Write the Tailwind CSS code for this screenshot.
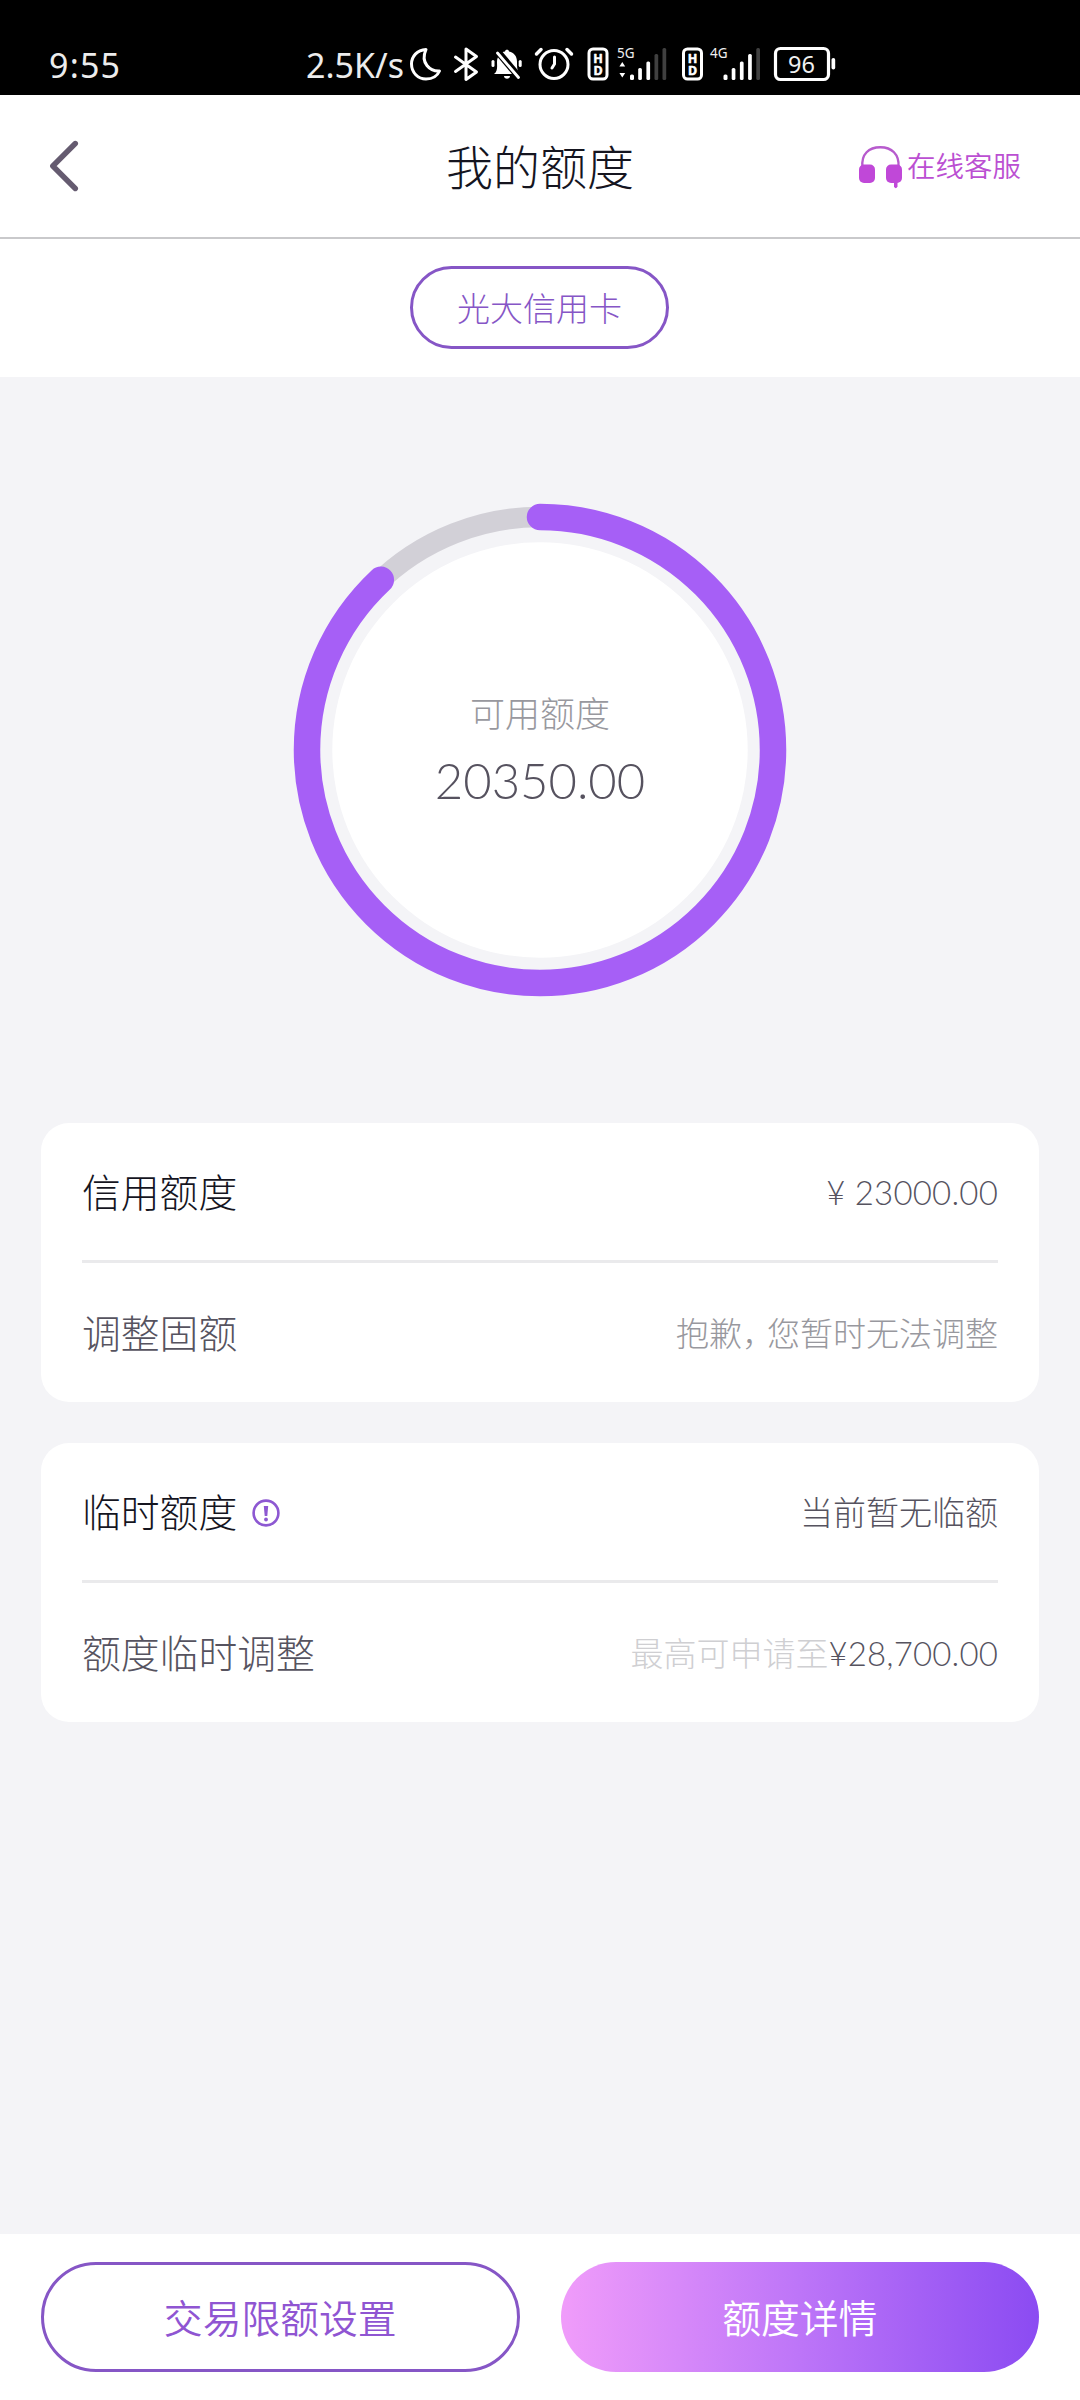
<!DOCTYPE html>
<html lang="zh-CN">
<head>
<meta charset="utf-8">
<title>我的额度</title>
<script src="https://cdn.jsdelivr.net/npm/@tailwindcss/browser@4"></script>
</head>
<body class="w-[1080px] h-[2400px] overflow-hidden bg-[#f4f4f7] flex flex-col font-[Lato,'Noto_Sans_CJK_SC',sans-serif] font-light">

<!-- Status bar -->
<div class="h-[95px] shrink-0 bg-black text-[#ececec] flex items-start pt-[40px] pl-[49px] font-['Noto_Sans',sans-serif] font-normal text-[34px] leading-[50px]">
  <span class="w-[257px] tracking-[1.2px]">9:55</span>
  <span class="w-[99px] whitespace-nowrap">2.5K/s</span>
  <svg class="w-[435px] h-[50px] shrink-0" viewBox="405 40 435 50" fill="none" stroke="#fff" stroke-linecap="round" stroke-linejoin="round">
    <!-- moon -->
    <path stroke-width="3" d="M426 49.500C417 50 411.500 56.500 411.500 64C411.500 72.500 418 79 426 79C432.500 79 437.500 75.500 439.500 71C430 71.500 420 63 426 49.500Z"/>
    <!-- bluetooth -->
    <path stroke-width="3" d="M455.500 57L476.500 72L466 79.500V49L476.500 56.500L455.500 71.500"/>
    <!-- muted bell -->
    <g fill="#fff" stroke="none">
      <path d="M494 74C498 71 497 66 497 62C497 56 501 52 505 51.500C505 49 509 49 509 51.500C514 52.500 517 56 517 62C517 67 517 71 520 74Z"/>
      <path d="M504 76H510C510 79.500 504 79.500 504 76Z"/>
      <rect x="491.500" y="60" width="3" height="7" rx="1.500"/><rect x="518.700" y="60" width="3" height="7" rx="1.500"/>
    </g>
    <path stroke="#000" stroke-width="7" stroke-linecap="butt" d="M498 52L519 77"/>
    <path stroke-width="2.800" d="M497.500 53L518.500 77.500"/>
    <!-- alarm -->
    <circle cx="554" cy="64.500" r="14" stroke-width="3"/>
    <path stroke-width="3" d="M554.500 57V64L552 68"/>
    <path stroke-width="3.500" d="M536.500 54L541 49.500M571.500 54L567 49.500"/>
    <!-- HD badges -->
    <rect x="589" y="49" width="18" height="30" rx="4" stroke-width="3"/>
    <rect x="683.500" y="49" width="18" height="30" rx="4" stroke-width="3"/>
    <g fill="#fff" stroke="#fff" stroke-width=".5" font-family="Noto Sans" font-weight="700" font-size="12.500" text-anchor="middle">
      <text x="598" y="63">H</text><text x="598" y="74.800">D</text>
      <text x="692.500" y="63">H</text><text x="692.500" y="74.800">D</text>
    </g>
    <g fill="#f0f0f0" stroke="none" font-family="Noto Sans" font-size="13.500">
      <text x="617" y="57.700">5G</text><text x="710" y="57.700">4G</text>
      <text x="788" y="73.200" font-size="23.500">96</text>
    </g>
    <!-- signal bars -->
    <g fill="#fff" stroke="none">
      <path d="M622.300 62L625.200 66.500H619.400ZM622.300 77.500L625.200 73H619.400Z"/>
      <rect x="630" y="74.500" width="4" height="5.500" rx="1.500"/><rect x="638.200" y="68" width="3.700" height="12" rx="1.500"/><rect x="646.400" y="61.500" width="3.700" height="18.500" rx="1.500"/>
      <rect x="723.500" y="74.500" width="4" height="5.500" rx="1.500"/><rect x="731.700" y="68" width="3.700" height="12" rx="1.500"/><rect x="739.900" y="61.500" width="3.700" height="18.500" rx="1.500"/><rect x="748.100" y="54" width="3.700" height="26" rx="1.500"/>
      <g fill="#404040"><rect x="654.500" y="54" width="3.700" height="26" rx="1.500"/><rect x="662.500" y="48" width="3.700" height="32" rx="1.500"/><rect x="756.300" y="48" width="3.700" height="32" rx="1.500"/></g>
      <rect x="831.500" y="58" width="3.700" height="11.500" rx="1.800"/>
    </g>
    <!-- battery -->
    <rect x="775.500" y="48.500" width="53" height="31" rx="5" stroke-width="3.200"/>
  </svg>
</div>

<!-- Header -->
<header class="h-[144px] shrink-0 bg-white border-b-2 border-[#c9c9cb] grid grid-cols-3 items-center pl-[49px] pr-[59px]">
  <svg class="w-[30px] h-[52px]" viewBox="0 0 30 52" fill="none" stroke="#655b70" stroke-width="5.400" stroke-linecap="round" stroke-linejoin="round"><path d="M26.300 3.500L3.800 26L26.300 48.500"/></svg>
  <h1 class="text-[47px] leading-none text-[#15151f] whitespace-nowrap text-center translate-x-[5px] pt-[2px]">我的额度</h1>
  <div class="flex items-center justify-end text-[#bb4fd2] text-[28.500px] font-[350] whitespace-nowrap pt-px">
    <svg class="w-[44px] h-[44px] mr-[5px]" viewBox="858 144 44 44" fill="#c048d8">
      <path fill="none" stroke="#b75bcd" stroke-width="2.400" d="M862.500 166C861 153 869 146.200 880.300 146.200C891.500 146.200 899.500 153 898.500 166"/>
      <rect x="859" y="163.500" width="16" height="18.500" rx="5"/><rect x="886" y="163.500" width="16" height="18.500" rx="5"/>
      <path d="M894 181H897.500V185.500Q895.700 189 894 185.500Z"/>
    </svg>
    <span>在线客服</span>
  </div>
</header>

<!-- Card selector -->
<div class="h-[138px] shrink-0 bg-white flex justify-center items-start pt-[27px] pr-px">
  <button class="w-[259px] h-[83px] rounded-full border-[3px] border-[#8656c6] text-[#8656c6] text-[33px] leading-none pt-px">光大信用卡</button>
</div>

<!-- Quota ring -->
<section class="h-[746px] shrink-0 grid place-items-center">
  <svg class="col-start-1 row-start-1 w-[494px] h-[494px]" viewBox="-247 -247 494 494" fill="none">
    <circle r="207.700" fill="#fff"/>
    <circle r="233" stroke="#d2d0d7" stroke-width="20.500"/>
    <circle r="233" stroke="#a65ff6" stroke-width="26.500" stroke-linecap="round" pathLength="1000" stroke-dasharray="880.300 1000" transform="rotate(-90)"/>
  </svg>
  <div class="col-start-1 row-start-1 flex flex-col items-center gap-[21px] pb-[5px]">
    <span class="text-[35px] leading-[44px] text-[#98989e]">可用额度</span>
    <span class="text-[49px] leading-[48px] text-[#56525f]">20350.00</span>
  </div>
</section>

<!-- Quota details -->
<main class="flex-1 px-[41px] flex flex-col gap-[41px] text-[33px] leading-none text-[#56535f]">
  <section class="h-[279px] bg-white rounded-[28px] px-[41px] grid grid-rows-2 divide-y-[3px] divide-[#eaeaec]">
    <div class="flex items-center justify-between pt-[3px]"><span class="text-[38.800px] text-[#15151f]">信用额度</span><span class="tracking-[0.2px]">¥ 23000.00</span></div>
    <div class="flex items-center justify-between pt-[3px]"><span class="text-[38.800px]">调整固额</span><span class="text-[#98989e]">抱歉<span class="tracking-[-8px]">，</span>您暂时无法调整</span></div>
  </section>
  <section class="h-[279px] bg-white rounded-[28px] px-[41px] grid grid-rows-2 divide-y-[3px] divide-[#eaeaec]">
    <div class="flex items-center justify-between pt-[3px]">
      <span class="text-[38.800px] text-[#15151f] flex items-center gap-[15px]">临时额度
        <svg class="w-[28px] h-[28px]" viewBox="0 0 28 28" fill="none" stroke="#8d58d2" stroke-width="2.600"><circle cx="14" cy="14" r="12.400"/><path fill="#8d58d2" stroke="none" d="M11.800 7H16.200L15.300 17H12.700Z"/><circle cx="14" cy="20.500" r="1.900" fill="#8d58d2" stroke="none"/></svg>
      </span>
      <span>当前暂无临额</span>
    </div>
    <div class="flex items-center justify-between pt-[3px]"><span class="text-[38.800px]">额度临时调整</span><span><span class="text-[#cfcfd2]">最高可申请至</span><span class="tracking-[0.15px]">¥28,700.00</span></span></div>
  </section>
</main>

<!-- Bottom actions -->
<footer class="h-[166px] shrink-0 bg-white grid grid-cols-2 gap-[41px] px-[41px] pt-[28px] pb-[28px] text-[38.800px] leading-none font-[350]">
  <button class="rounded-full border-[3px] border-[#8656c6] text-[#8f55d2] pt-[2px]">交易限额设置</button>
  <button class="rounded-full bg-linear-to-r/srgb from-[#f09cfa] via-[#bd75f8] to-[#8b4bf2] text-white pt-[2px]">额度详情</button>
</footer>
</body>
</html>
